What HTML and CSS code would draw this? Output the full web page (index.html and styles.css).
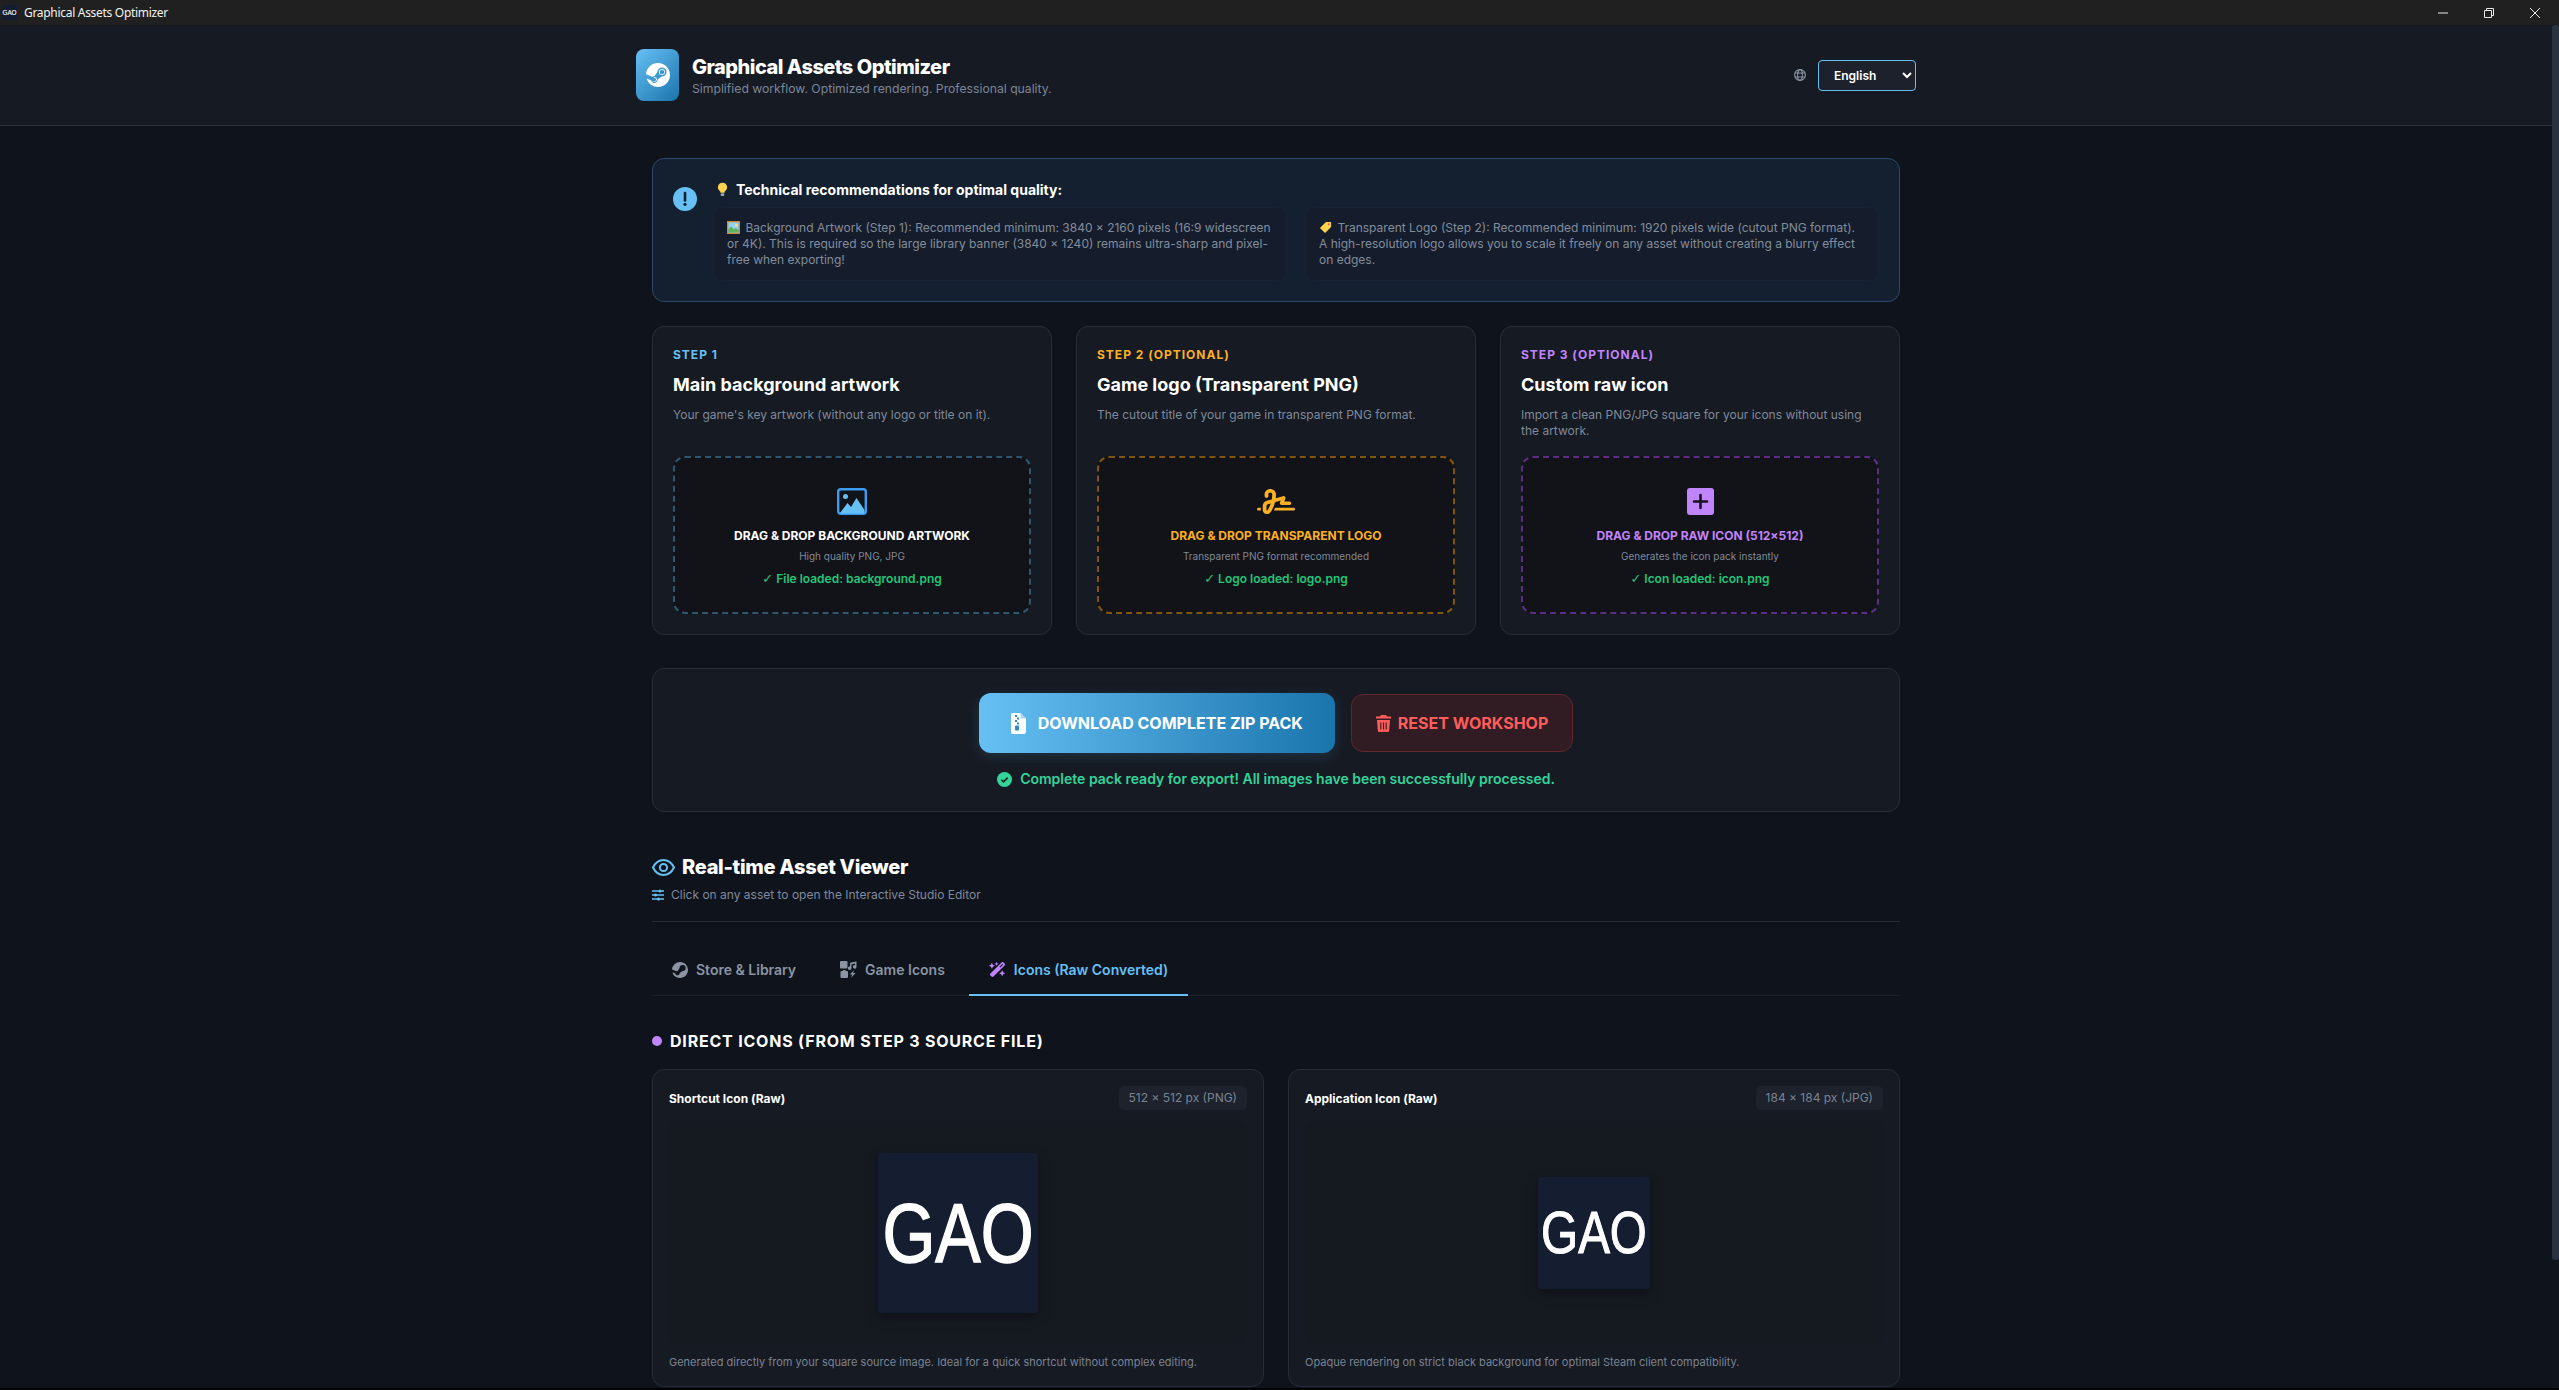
FILE: index.html
```html
<!DOCTYPE html>
<html lang="en">
<head>
  <meta charset="UTF-8" />
  <meta name="viewport" content="width=device-width, initial-scale=1.0" />
  <title>Graphical Assets Optimizer</title>
  <link rel="stylesheet" href="styles.css">
</head>
<body>
<div class="window">

  <div class="titlebar">
    <svg class="titlebar-icon" viewBox="0 0 160 160"><rect width="160" height="160" fill="#141e30"/><text transform="translate(80 109) scale(1 1.235)" text-anchor="middle" font-size="68" class="gao-text">GAO</text></svg>
    <span class="titlebar-name">Graphical Assets Optimizer</span>
    <div class="window-controls">
      <svg viewBox="0 0 10 10"><path d="M0 5h10" /></svg>
      <svg viewBox="0 0 10 10"><path d="M.5 2.5h7v7h-7zM2.5 2.5V.5h7v7h-2" /></svg>
      <svg viewBox="0 0 10 10"><path d="M0 0l10 10M10 0L0 10" /></svg>
    </div>
  </div>

  <div class="app">
    <div class="page">

      <header class="header">
        <div class="header-inner">
          <div class="brand">
            <div class="logo">
              <svg viewBox="0 0 16 16"><path d="M.329 10.333A8.01 8.01 0 0 0 7.99 16C12.414 16 16 12.418 16 8s-3.586-8-8.009-8A8.006 8.006 0 0 0 0 7.468l.003.006 4.304 1.769A2.198 2.198 0 0 1 5.62 8.88l1.96-2.844-.001-.04a3.046 3.046 0 0 1 3.042-3.043 3.046 3.046 0 0 1 3.042 3.043 3.047 3.047 0 0 1-3.111 3.044l-2.804 2a2.223 2.223 0 0 1-3.075 2.11 2.217 2.217 0 0 1-1.312-1.568L.33 10.333Z"/><path d="M4.868 12.683a1.715 1.715 0 0 0 1.318-3.165 1.705 1.705 0 0 0-1.263-.02l1.023.424a1.261 1.261 0 1 1-.97 2.33l-.99-.41a1.7 1.7 0 0 0 .882.84Zm3.726-6.687a2.03 2.03 0 0 0 2.027 2.029 2.03 2.03 0 0 0 2.027-2.029 2.03 2.03 0 0 0-2.027-2.027 2.03 2.03 0 0 0-2.027 2.027Zm2.03-1.527a1.524 1.524 0 1 1-.002 3.048 1.524 1.524 0 0 1 .002-3.048Z"/></svg>
            </div>
            <div class="brand-text">
              <h1 class="brand-title">Graphical Assets Optimizer</h1>
              <p class="brand-sub">Simplified workflow. Optimized rendering. Professional quality.</p>
            </div>
          </div>
          <div class="lang">
            <svg class="lang-globe" viewBox="0 0 12 12"><circle cx="6" cy="6" r="5.4"/><ellipse cx="6" cy="6" rx="2.4" ry="5.4"/><path d="M.8 4h10.4M.8 8h10.4"/></svg>
            <select class="lang-select">
              <option>English</option>
              <option>Français</option>
            </select>
          </div>
        </div>
      </header>

      <main class="main">

        <section class="notice">
          <svg class="notice-icon" viewBox="0 0 24 24"><circle cx="12" cy="12" r="12" fill="#66c0f4"/><path d="M12 6v7.5" stroke="#141e30" stroke-width="2.6" stroke-linecap="round"/><circle cx="12" cy="17.3" r="1.6" fill="#141e30"/></svg>
          <div class="notice-body">
            <div class="notice-title">
              <svg class="emoji" viewBox="0 0 12 16"><path d="M6 .5a5 5 0 0 0-3 9c.6.6.8 1.200.8 2h4.400c0-.8.2-1.400.8-2a5 5 0 0 0-3-9z" fill="#fcd34d"/><rect x="4" y="12" width="4" height="3" rx="1" fill="#9ca3af"/></svg>
              Technical recommendations for optimal quality:
            </div>
            <div class="notice-grid">
              <p class="notice-box"><svg class="emoji emoji-inline" viewBox="0 0 14 14"><rect width="14" height="14" fill="#c98b3c"/><rect x="1.500" y="1.500" width="11" height="11" fill="#8fd3f0"/><path d="M1.500 12.500V9l3-3 3 3 2-1.500 3 2.500v2.500z" fill="#5fb35f"/><circle cx="10" cy="4.500" r="1.300" fill="#fde68a"/></svg> Background Artwork (Step 1): Recommended minimum: 3840 × 2160 pixels (16:9 widescreen or 4K). This is required so the large library banner (3840 × 1240) remains ultra-sharp and pixel-free when exporting!</p>
              <p class="notice-box"><svg class="emoji emoji-inline" viewBox="0 0 14 14"><path d="M7.500 1H13v5.500L6.500 13 1 7.500z" fill="#fcd34d"/><circle cx="10.500" cy="3.500" r="1.200" fill="#e0556a"/></svg> Transparent Logo (Step 2): Recommended minimum: 1920 pixels wide (cutout PNG format). A high-resolution logo allows you to scale it freely on any asset without creating a blurry effect on edges.</p>
            </div>
          </div>
        </section>

        <section class="steps">
          <div class="step step-blue">
            <div class="step-label">STEP 1</div>
            <h2 class="step-title">Main background artwork</h2>
            <p class="step-desc">Your game's key artwork (without any logo or title on it).</p>
            <div class="drop">
              <svg class="drop-icon" width="30" height="27" viewBox="0 0 30 27"><rect x="1.200" y="1.200" width="27.600" height="24.600" rx="2.500" fill="#11131a" stroke="#3b9cf0" stroke-width="2.400"/><path d="M3 25l7.500-10 3.500 4 5.500-9L27.500 22v2.500a1 1 0 0 1-1 1H3z" fill="#66c0f4"/><circle cx="8.500" cy="8.500" r="2.500" fill="#66c0f4"/></svg>
              <div class="drop-title">DRAG &amp; DROP BACKGROUND ARTWORK</div>
              <div class="drop-sub">High quality PNG, JPG</div>
              <div class="drop-ok"><span class="drop-check">✓</span> File loaded: background.png</div>
            </div>
          </div>

          <div class="step step-orange">
            <div class="step-label">STEP 2 (OPTIONAL)</div>
            <h2 class="step-title">Game logo (Transparent PNG)</h2>
            <p class="step-desc">The cutout title of your game in transparent PNG format.</p>
            <div class="drop">
              <svg class="drop-icon" width="38" height="27" viewBox="0 16 640 480" preserveAspectRatio="none"><path fill="#fbb024" d="M192 128c0-17.700 14.300-32 32-32s32 14.300 32 32v7.800c0 27.700-2.400 55.300-7.100 82.500l-84.400 25.300c-40.600 12.200-68.500 49.600-68.500 92v71.900c0 40 32.500 72.500 72.500 72.500c26 0 50-13.900 62.900-36.500l13.900-24.300c26.800-47 46.500-97.700 58.400-150.500l94.400-28.300-12.500 37.500c-3.300 9.800-1.600 20.500 4.400 28.800s15.700 13.300 26 13.300H544c17.700 0 32-14.300 32-32s-14.300-32-32-32H460.400l18-53.900c3.800-11.300 .9-23.800-7.400-32.400s-20.700-11.800-32.200-8.400L316.400 198.100c2.400-20.700 3.600-41.400 3.600-62.300V128c0-53-43-96-96-96s-96 43-96 96v32c0 17.700 14.300 32 32 32s32-14.300 32-32V128zm-9.200 177l49-14.700c-10.400 33.800-24.500 66.400-42.100 97.200l-13.900 24.300c-1.500 2.600-4.300 4.300-7.400 4.300c-4.700 0-8.500-3.800-8.500-8.500V335.600c0-14.100 9.300-26.600 22.800-30.700zM24 368c-13.300 0-24 10.700-24 24s10.700 24 24 24H64.300c-.2-2.800-.3-5.600-.3-8.500V368H24zm592 48c13.300 0 24-10.700 24-24s-10.700-24-24-24H305.900c-6.700 16.300-14.200 32.300-22.300 48H616z"/></svg>
              <div class="drop-title">DRAG &amp; DROP TRANSPARENT LOGO</div>
              <div class="drop-sub">Transparent PNG format recommended</div>
              <div class="drop-ok"><span class="drop-check">✓</span> Logo loaded: logo.png</div>
            </div>
          </div>

          <div class="step step-purple">
            <div class="step-label">STEP 3 (OPTIONAL)</div>
            <h2 class="step-title">Custom raw icon</h2>
            <p class="step-desc">Import a clean PNG/JPG square for your icons without using the artwork.</p>
            <div class="drop">
              <svg class="drop-icon" width="27" height="27" viewBox="0 0 27 27"><rect width="27" height="27" rx="3" fill="#c084fc"/><path d="M13.500 7v13M7 13.500h13" stroke="#14121c" stroke-width="2.600" stroke-linecap="round"/></svg>
              <div class="drop-title">DRAG &amp; DROP RAW ICON (512×512)</div>
              <div class="drop-sub">Generates the icon pack instantly</div>
              <div class="drop-ok"><span class="drop-check">✓</span> Icon loaded: icon.png</div>
            </div>
          </div>
        </section>

        <section class="actions">
          <div class="action-row">
            <button class="btn btn-download">
              <svg width="15" height="21" viewBox="0 0 15 21"><path d="M2 0h7.500L15 5.500V19a2 2 0 0 1-2 2H2a2 2 0 0 1-2-2V2a2 2 0 0 1 2-2z" fill="#fff"/><path d="M9.500 0v4a1.500 1.500 0 0 0 1.500 1.500h4z" fill="#a9d8f3"/><path d="M4 2h2v2H4zM6 4.500h2v2H6zM4 7h2v2H4zM6 9.500h2v2H6z" fill="#2a8cc4"/><rect x="4" y="12.500" width="4" height="5" rx="1" fill="#2a8cc4"/></svg>
              DOWNLOAD COMPLETE ZIP PACK
            </button>
            <button class="btn btn-reset">
              <svg width="15" height="17" viewBox="0 0 15 17"><path d="M5 0h5l1 1.500h4v2H0v-2h4z" fill="#ff5c5c"/><path d="M1 5h13l-.8 10.500A1.600 1.600 0 0 1 11.600 17H3.400a1.600 1.600 0 0 1-1.600-1.500z" fill="#ff5c5c"/><path d="M4.800 7.500v7M7.500 7.500v7M10.200 7.500v7" stroke="#301c22" stroke-width="1.100"/></svg>
              RESET WORKSHOP
            </button>
          </div>
          <div class="status">
            <svg width="15" height="15" viewBox="0 0 15 15"><circle cx="7.500" cy="7.500" r="7.500" fill="#34d399"/><path d="M4.300 7.700l2.200 2.200 4.200-4.300" fill="none" stroke="#14261f" stroke-width="1.600"/></svg>
            Complete pack ready for export! All images have been successfully processed.
          </div>
        </section>

        <section class="viewer">
          <div class="viewer-head">
            <h2 class="viewer-title">
              <svg width="23" height="17" viewBox="0 0 23 17"><path d="M1 8.500C3.500 3.500 7 1 11.500 1S19.500 3.500 22 8.500C19.500 13.500 16 16 11.500 16S3.500 13.500 1 8.500z" fill="none" stroke="#66c0f4" stroke-width="2"/><circle cx="11.500" cy="8.500" r="3.600" fill="none" stroke="#66c0f4" stroke-width="2"/></svg>
              Real-time Asset Viewer
            </h2>
            <p class="viewer-sub">
              <svg width="12" height="12" viewBox="0 0 12 12"><path d="M0 2h12M0 6h12M0 10h12" stroke="#66c0f4" stroke-width="1.300"/><circle cx="8" cy="2" r="1.500" fill="#66c0f4"/><circle cx="3.500" cy="6" r="1.500" fill="#66c0f4"/><circle cx="6.500" cy="10" r="1.500" fill="#66c0f4"/></svg>
              Click on any asset to open the Interactive Studio Editor
            </p>
          </div>

          <nav class="tabs">
            <a class="tab">
              <svg width="16" height="16" viewBox="0 0 16 16" fill="#8a94a3"><path d="M.329 10.333A8.01 8.01 0 0 0 7.990 16C12.414 16 16 12.418 16 8s-3.586-8-8.009-8A8.006 8.006 0 0 0 0 7.468l.003.006 4.304 1.769A2.198 2.198 0 0 1 5.620 8.880l1.960-2.844-.001-.04a3.046 3.046 0 0 1 3.042-3.043 3.046 3.046 0 0 1 3.042 3.043 3.047 3.047 0 0 1-3.111 3.044l-2.804 2a2.223 2.223 0 0 1-3.075 2.110 2.217 2.217 0 0 1-1.312-1.568L.330 10.333Z"/></svg>
              Store &amp; Library
            </a>
            <a class="tab">
              <svg width="17" height="17" viewBox="0 0 17 17" fill="#8a94a3"><rect x="0" y="0" width="7.500" height="7.500" rx="1"/><path d="M16.500.5v5.300a1.800 1.800 0 1 1-1.400-1.700V2.600L11.500 3.400v3.700a1.800 1.800 0 1 1-1.400-1.700V1.800z"/><path d="M1.500 10h1.200l.6-1h1.900l.6 1h1.200a1 1 0 0 1 1 1v5a1 1 0 0 1-1 1h-5.500a1 1 0 0 1-1-1v-5a1 1 0 0 1 1-1z"/><path d="M14 9l-4 4.500h2.300L11 17l4.500-5h-2.500z"/></svg>
              Game Icons
            </a>
            <a class="tab tab-active">
              <svg width="17" height="15" viewBox="0 0 576 512" fill="#c084fc"><path d="M234.700 42.700L197 56.800c-3 1.100-5 4-5 7.200s2 6.100 5 7.200l37.700 14.100L248.800 123c1.100 3 4 5 7.200 5s6.100-2 7.200-5l14.100-37.700L315 71.200c3-1.100 5-4 5-7.200s-2-6.100-5-7.200L277.300 42.700 263.200 5c-1.100-3-4-5-7.200-5s-6.100 2-7.200 5L234.700 42.700zM46.100 395.400c-18.700 18.700-18.700 49.100 0 67.900l34.600 34.600c18.700 18.700 49.100 18.700 67.900 0L529.900 116.500c18.700-18.700 18.700-49.100 0-67.900L495.300 14.100c-18.700-18.700-49.100-18.700-67.900 0L46.100 395.400zM484.600 82.600l-105 105-23.300-23.300 105-105 23.300 23.300zM7.500 117.200C3 118.900 0 123.200 0 128s3 9.100 7.500 10.800L64 160l21.200 56.500c1.700 4.500 6 7.500 10.800 7.500s9.100-3 10.800-7.500L128 160l56.500-21.200c4.500-1.700 7.500-6 7.500-10.800s-3-9.100-7.500-10.800L128 96 106.800 39.500C105.100 35 100.800 32 96 32s-9.100 3-10.800 7.500L64 96 7.500 117.200zm352 256c-4.500 1.700-7.500 6-7.500 10.800s3 9.100 7.500 10.800L416 416l21.200 56.500c1.700 4.500 6 7.500 10.800 7.500s9.100-3 10.800-7.500L480 416l56.500-21.200c4.500-1.700 7.500-6 7.500-10.800s-3-9.100-7.500-10.800L480 352l-21.200-56.500c-1.700-4.500-6-7.500-10.800-7.500s-9.100 3-10.800 7.500L416 352l-56.500 21.200z"/></svg>
              Icons (Raw Converted)
            </a>
          </nav>

          <h3 class="group-title"><span class="group-dot"></span>DIRECT ICONS (FROM STEP 3 SOURCE FILE)</h3>

          <div class="assets">
            <article class="asset">
              <div class="asset-head">
                <span class="asset-name">Shortcut Icon (Raw)</span>
                <span class="asset-size">512 × 512 px (PNG)</span>
              </div>
              <div class="asset-preview">
                <svg class="gao gao-large" viewBox="0 0 160 160"><rect width="160" height="160" fill="#141e30"/><text transform="translate(80 109) scale(1 1.235)" text-anchor="middle" font-size="68" class="gao-text">GAO</text></svg>
              </div>
              <p class="asset-desc">Generated directly from your square source image. Ideal for a quick shortcut without complex editing.</p>
            </article>
            <article class="asset">
              <div class="asset-head">
                <span class="asset-name">Application Icon (Raw)</span>
                <span class="asset-size">184 × 184 px (JPG)</span>
              </div>
              <div class="asset-preview">
                <svg class="gao gao-small" viewBox="0 0 160 160"><rect width="160" height="160" fill="#141e30"/><text transform="translate(80 109) scale(1 1.235)" text-anchor="middle" font-size="68" class="gao-text">GAO</text></svg>
              </div>
              <p class="asset-desc">Opaque rendering on strict black background for optimal Steam client compatibility.</p>
            </article>
          </div>
        </section>

      </main>
    </div>
    <div class="scrollbar"><div class="scrollbar-thumb"></div></div>
  </div>
</div>
</body>
</html>
```

FILE: styles.css
```css
* {
  box-sizing: border-box;
}
html, body {
  height: 100%;
}
body {
  margin: 0;
  background: #000;
  font-family: Inter, "Noto Sans", sans-serif;
  color: #fff;
  overflow: hidden;
}
h1, h2, h3, p {
  margin: 0;
}
.window {
  height: 1388px;
  display: flex;
  flex-direction: column;
  overflow: hidden;
}

/* Title bar */
.titlebar {
  flex: none;
  height: 25px;
  background: #202020;
  display: flex;
  align-items: center;
  padding-left: 2px;
}
.titlebar-icon {
  width: 15px;
  height: 15px;
  margin-right: 7px;
}
.titlebar-name {
  font-family: "Noto Sans", sans-serif;
  font-size: 12px;
  letter-spacing: -0.3px;
  color: #f2f2f2;
}
.window-controls {
  margin-left: auto;
  display: flex;
  gap: 36px;
  padding-right: 19px;
}
.window-controls svg {
  width: 10px;
  height: 10px;
  fill: none;
  stroke: #e8e8e8;
  stroke-width: 1;
}

/* App frame */
.app {
  flex: 1;
  min-height: 0;
  display: flex;
  background: #0f131c;
}
.page {
  flex: 1;
  min-width: 0;
  overflow: hidden;
}
.scrollbar {
  flex: none;
  width: 7px;
  background: #10141d;
}
.scrollbar-thumb {
  height: 1235px;
  background: #2a3140;
  border-radius: 3px;
}

/* Header */
.header {
  background: #161a23;
  border-bottom: 1px solid #2a2f3a;
}
.header-inner {
  width: 1280px;
  margin: 0 auto;
  padding: 24px 0;
  display: flex;
  align-items: center;
  justify-content: space-between;
}
.brand {
  display: flex;
  align-items: center;
  gap: 13px;
}
.logo {
  width: 43px;
  height: 52px;
  border-radius: 8px;
  background: linear-gradient(135deg, #66c0f4, #1a75ad);
  display: flex;
  align-items: center;
  justify-content: center;
}
.logo svg {
  width: 24px;
  height: 24px;
  fill: #fff;
}
.brand-text {
  padding-top: 2px;
}
.brand-title {
  font-size: 20px;
  line-height: 24px;
  font-weight: 800;
  letter-spacing: -0.5px;
}
.brand-sub {
  margin-top: 2px;
  font-size: 12.2px;
  line-height: 16px;
  color: #7c8698;
}
.lang {
  display: flex;
  align-items: center;
  gap: 12px;
}
.lang-globe {
  width: 12px;
  height: 12px;
  fill: none;
  stroke: #8a94a3;
  stroke-width: 1.100;
}
.lang-select {
  color-scheme: dark;
  width: 98px;
  height: 31px;
  padding: 0 11px;
  background: #1c212c;
  border: 1px solid #66c0f4;
  border-radius: 4px;
  color: #fff;
  font-family: inherit;
  font-size: 12px;
  font-weight: 600;
}

/* Main column */
.main {
  width: 1248px;
  margin: 0 auto;
  padding-top: 32px;
}

/* Recommendations */
.notice {
  display: flex;
  gap: 16px;
  padding: 20px;
  background: #14202f;
  border: 1px solid #2b4a6b;
  border-radius: 12px;
  margin-bottom: 24px;
}
.notice-icon {
  flex: none;
  width: 24px;
  height: 24px;
  margin-top: 8px;
}
.notice-body {
  flex: 1;
  min-width: 0;
}
.notice-title {
  display: flex;
  align-items: center;
  gap: 8px;
  height: 20px;
  padding-left: 4px;
  font-size: 14px;
  font-weight: 700;
  margin-bottom: 8px;
}
.emoji {
  width: 11px;
  height: 15px;
  flex: none;
}
.emoji-inline {
  width: 13px;
  height: 13px;
  vertical-align: -2px;
  margin-right: 2px;
}
.notice-grid {
  display: grid;
  grid-template-columns: 1fr 1fr;
  gap: 18px;
}
.notice-box {
  padding: 12px 12px 12px 13px;
  background: #151d2c;
  border: 1px solid #172236;
  border-radius: 8px;
  font-size: 12px;
  line-height: 16px;
  color: #828c9b;
}

/* Upload steps */
.steps {
  display: grid;
  grid-template-columns: repeat(3, 1fr);
  gap: 24px;
  margin-bottom: 33px;
}
.step {
  background: #161a23;
  border: 1px solid #272c38;
  border-radius: 12px;
  padding: 20px;
  display: flex;
  flex-direction: column;
}
.step-label {
  font-size: 12px;
  line-height: 16px;
  font-weight: 700;
  letter-spacing: 1px;
}
.step-title {
  font-size: 18px;
  line-height: 22px;
  font-weight: 700;
  margin: 11px 0;
}
.step-desc {
  font-size: 12px;
  line-height: 16px;
  color: #7f8999;
  min-height: 32px;
  margin-bottom: 17px;
}
.step-blue .step-label { color: #66c0f4; }
.step-orange .step-label { color: #fbb024; }
.step-purple .step-label { color: #c084fc; }
.step-blue .drop { border-color: #2f566f; }
.step-orange .drop { border-color: #80550f; }
.step-purple .drop { border-color: #5b2d84; }
.step-orange .drop-title { color: #fbb024; }
.step-purple .drop-title { color: #c084fc; }
.drop {
  border: 2px dashed #2f566f;
  border-radius: 12px;
  background: #121318;
  padding: 30px 12px 25px;
  display: flex;
  flex-direction: column;
  align-items: center;
  text-align: center;
}
.drop-icon {
  height: 27px;
  margin-bottom: 13px;
}
.drop-title {
  font-size: 12px;
  line-height: 16px;
  font-weight: 700;
}
.drop-sub {
  font-size: 10px;
  line-height: 12px;
  color: #7f8999;
  margin-top: 6px;
}
.drop-ok {
  font-size: 12px;
  line-height: 16px;
  font-weight: 600;
  color: #22c578;
  margin-top: 9px;
}
.drop-check {
  font-family: "DejaVu Sans", sans-serif;
  font-size: 13px;
  line-height: 1;
}

/* Export panel */
.actions {
  background: #161a23;
  border: 1px solid #272c38;
  border-radius: 12px;
  padding: 24px 24px 23px;
  margin-bottom: 41px;
}
.action-row {
  display: flex;
  justify-content: center;
  align-items: center;
  gap: 16px;
}
.btn {
  display: flex;
  align-items: center;
  font-family: inherit;
  font-size: 16px;
  font-weight: 700;
  border-radius: 12px;
}
.btn-download {
  height: 60px;
  gap: 12px;
  padding: 0 32px;
  border: none;
  color: #fff;
  background: linear-gradient(90deg, #66c0f4, #1a75ad);
  box-shadow: 0 4px 14px rgba(102, 192, 244, 0.15);
}
.btn-reset {
  height: 58px;
  gap: 7px;
  padding: 0 24px;
  color: #ff5c5c;
  background: #301c22;
  border: 1px solid #5f262c;
}
.status {
  display: flex;
  align-items: center;
  justify-content: center;
  gap: 8px;
  margin-top: 17px;
  font-size: 14px;
  line-height: 18px;
  font-weight: 600;
  color: #34d399;
}

/* Viewer */
.viewer-head {
  padding-bottom: 18px;
  border-bottom: 1px solid #252a35;
}
.viewer-title {
  display: flex;
  align-items: center;
  gap: 7px;
  font-size: 20px;
  line-height: 28px;
  font-weight: 800;
  letter-spacing: -0.3px;
}
.viewer-sub {
  display: flex;
  align-items: center;
  gap: 7px;
  margin-top: 6px;
  font-size: 12px;
  line-height: 16px;
  color: #7f8a9c;
}
.tabs {
  display: flex;
  gap: 4px;
  margin-top: 23px;
  border-bottom: 1px solid #1a1f29;
}
.tab {
  display: flex;
  align-items: center;
  gap: 8px;
  height: 51px;
  padding: 0 20px;
  font-size: 14px;
  font-weight: 600;
  color: #8a94a3;
  border-bottom: 2px solid transparent;
  margin-bottom: -1px;
}
.tab-active {
  color: #66c0f4;
  border-bottom-color: #66c0f4;
}
.group-title {
  display: flex;
  align-items: center;
  gap: 8px;
  margin-top: 35px;
  font-size: 16px;
  line-height: 20px;
  font-weight: 700;
  letter-spacing: 0.8px;
}
.group-dot {
  width: 10px;
  height: 10px;
  border-radius: 50%;
  background: #c084fc;
}
.assets {
  display: grid;
  grid-template-columns: 1fr 1fr;
  gap: 24px;
  margin-top: 18px;
}
.asset {
  background: #161a23;
  border: 1px solid #272c38;
  border-radius: 12px;
  padding: 16px;
}
.asset-head {
  display: flex;
  align-items: center;
  justify-content: space-between;
  height: 24px;
}
.asset-name {
  font-size: 12px;
  font-weight: 700;
}
.asset-size {
  padding: 0 10px;
  height: 24px;
  line-height: 24px;
  background: #1d222d;
  border-radius: 5px;
  font-size: 12px;
  color: #7a8392;
}
.asset-preview {
  height: 223px;
  margin-top: 11px;
  background: #151a21;
  border-radius: 8px;
  display: flex;
  align-items: center;
  justify-content: center;
}
.gao {
  border-radius: 4px;
  box-shadow: 0 4px 12px rgba(0, 0, 0, 0.35);
}
.gao-large {
  width: 160px;
  height: 160px;
}
.gao-small {
  width: 112px;
  height: 112px;
}
.gao-text {
  fill: #fff;
  stroke: #fff;
  stroke-width: 1.2;
  font-family: "Liberation Sans", Arial, sans-serif;
}
.asset-desc {
  margin-top: 10px;
  font-size: 11px;
  line-height: 16px;
  color: #7a8392;
}
```
